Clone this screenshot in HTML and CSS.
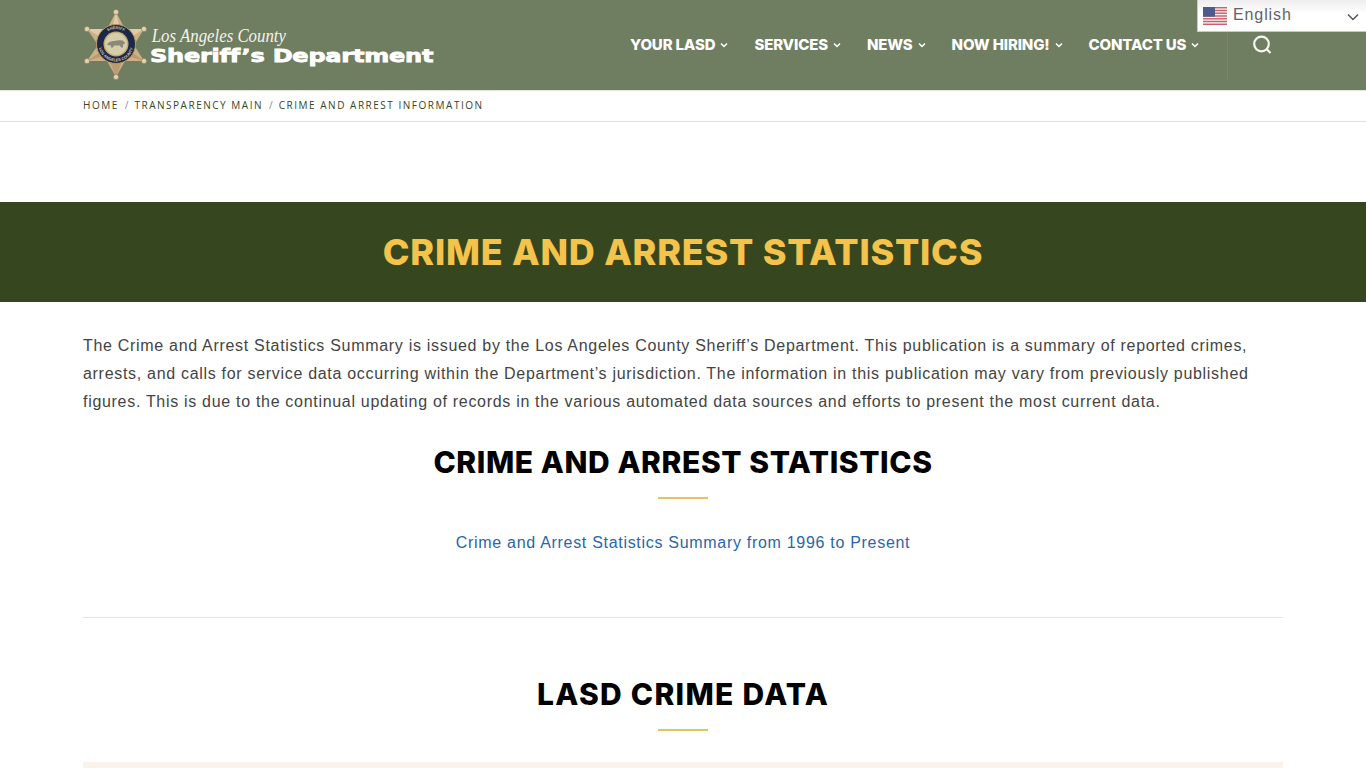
FILE: index.html
```html
<!DOCTYPE html>
<html lang="en">
<head>
<meta charset="utf-8">
<title>Crime and Arrest Statistics</title>
<link rel="stylesheet" href="styles.css">
</head>
<body>
<header class="site-header">
  <a class="logo" href="#">
    <svg class="badge" width="66" height="72" viewBox="0 0 66 72">
      <defs>
        <path id="ring-top" d="M17 35a15 15 0 0 1 30 0"/>
        <path id="ring-bottom" d="M14.500 35a17.500 17.500 0 0 0 35 0"/>
      </defs>
      <polygon points="32,3 41,20 60,20 50,36 60,52 41,52 32,68 23,52 3,52 14,36 3,20 23,20" fill="#cdb086"/>
      <polygon points="32,3 36,20 60,20 44,30 32,35 20,30 3,20 28,20" fill="#e0cba8"/>
      <polygon points="60,52 41,46 32,68 23,46 3,52 18,42 32,40 46,42" fill="#bb9b70"/>
      <g fill="#e2d3b4" stroke="#8d7a58" stroke-width=".6">
        <circle cx="32" cy="3" r="2.600"/><circle cx="60" cy="20" r="2.600"/><circle cx="60" cy="52" r="2.600"/>
        <circle cx="32" cy="68" r="2.600"/><circle cx="3" cy="52" r="2.600"/><circle cx="3" cy="20" r="2.600"/>
      </g>
      <circle cx="32" cy="35" r="19.500" fill="#1d2748"/>
      <circle cx="32" cy="35" r="19.500" fill="none" stroke="#b59a62" stroke-width="1"/>
      <circle cx="32" cy="35" r="12.500" fill="#c3ad72"/>
      <circle cx="32" cy="35" r="11" fill="#d6cdaa"/>
      <path d="M23 36c1-3 4-4 7-4 3 0 6-1 8-.5 2 .5 3 2 3 3l-2 1v3h-2l-1-2h-6l-1 2h-2v-2z" fill="#8a887a"/>
      <text class="badge-text"><textPath href="#ring-top" startOffset="50%" text-anchor="middle">SHERIFF</textPath></text>
      <text class="badge-text"><textPath href="#ring-bottom" startOffset="50%" text-anchor="middle">LOS ANGELES COUNTY</textPath></text>
    </svg>
    <span class="logo-text">
      <span class="logo-county">Los Angeles County</span>
      <span class="logo-dept">Sheriff’s Department</span>
    </span>
  </a>
  <nav class="main-nav">
    <a class="nav-item" href="#">YOUR LASD <svg class="chev" viewBox="0 0 8 6"><path d="M1 1.500l3 3 3-3"/></svg></a>
    <a class="nav-item" href="#">SERVICES <svg class="chev" viewBox="0 0 8 6"><path d="M1 1.500l3 3 3-3"/></svg></a>
    <a class="nav-item" href="#">NEWS <svg class="chev" viewBox="0 0 8 6"><path d="M1 1.500l3 3 3-3"/></svg></a>
    <a class="nav-item" href="#">NOW HIRING! <svg class="chev" viewBox="0 0 8 6"><path d="M1 1.500l3 3 3-3"/></svg></a>
    <a class="nav-item" href="#">CONTACT US <svg class="chev" viewBox="0 0 8 6"><path d="M1 1.500l3 3 3-3"/></svg></a>
  </nav>
  <div class="search-cell">
    <svg class="search-icon" width="20" height="20" viewBox="0 0 20 20"><circle cx="9.500" cy="9" r="7.300"/><path d="M14.800 14.300l3.700 3.700"/></svg>
  </div>
</header>

<div class="lang-widget">
  <svg class="flag" width="24" height="18" viewBox="0 0 24 18">
    <rect width="24" height="18" fill="#f4f0f0"/>
    <g fill="#c9606a"><rect width="24" height="1.400"/><rect y="2.800" width="24" height="1.400"/><rect y="5.500" width="24" height="1.400"/><rect y="8.300" width="24" height="1.400"/><rect y="11.100" width="24" height="1.400"/><rect y="13.800" width="24" height="1.400"/><rect y="16.600" width="24" height="1.400"/></g>
    <rect width="12" height="9.700" fill="#4f5a8c"/>
  </svg>
  <span class="lang-label">English</span>
  <svg class="lang-chev" width="12" height="8" viewBox="0 0 12 8"><path d="M1 1.500l5 5 5-5"/></svg>
</div>

<div class="breadcrumbs">
  <a href="#">HOME</a><span class="sep">/</span><a href="#">TRANSPARENCY MAIN</a><span class="sep">/</span><span>CRIME AND ARREST INFORMATION</span>
</div>

<section class="banner"><h1>CRIME AND ARREST STATISTICS</h1></section>

<main class="content">
  <p class="intro">The Crime and Arrest Statistics Summary is issued by the Los Angeles County Sheriff’s Department. This publication is a summary of reported crimes, arrests, and calls for service data occurring within the Department’s jurisdiction. The information in this publication may vary from previously published figures. This is due to the continual updating of records in the various automated data sources and efforts to present the most current data.</p>
  <h2 class="section-title">CRIME AND ARREST STATISTICS</h2>
  <div class="rule"></div>
  <p class="link-line"><a href="#">Crime and Arrest Statistics Summary from 1996 to Present</a></p>
  <hr class="divider">
  <h2 class="section-title second">LASD CRIME DATA</h2>
  <div class="rule"></div>
  <div class="beige"></div>
</main>
</body>
</html>
```
FILE: styles.css
```css
* { box-sizing: border-box; }
html, body { margin: 0; padding: 0; height: 768px; overflow: hidden; }
body { font-family: "Liberation Sans", Arial, sans-serif; background: #fff; color: #3b3b3b; }
a { text-decoration: none; color: inherit; }

.site-header {
  height: 91px;
  background: #6f7d60;
  border-bottom: 1px solid #dfe5da;
  display: flex;
  align-items: flex-start;
  padding-left: 83px;
}
.logo { display: flex; align-items: flex-start; flex: none; width: 353px; padding-top: 9px; margin-left: 1px; }
.badge { flex: none; }
.badge-text { font-family: "Liberation Sans", sans-serif; font-size: 4px; font-weight: 700; fill: #d8c9a0; }
.logo-text { display: flex; flex-direction: column; color: #fff; padding-top: 16px; }
.logo-county {
  font-family: "Liberation Serif", serif; font-style: italic; font-size: 19px; line-height: 20px;
  color: #f3f3ee; white-space: nowrap; padding-left: 2px;
  transform: translateY(1px) scaleX(.885); transform-origin: left center;
}
.logo-dept {
  font-family: "DejaVu Sans", sans-serif; font-weight: 700; font-size: 18.500px; line-height: 22.500px;
  letter-spacing: -.2px; -webkit-text-stroke: .8px #fff; white-space: nowrap;
  transform: scaleX(1.3); transform-origin: left center;
}

.main-nav { display: flex; flex: none; gap: 26px; margin-left: 193px; padding-top: 36px; }
.nav-item {
  font-family: Inter, sans-serif; font-weight: 800; font-size: 15px; line-height: 18px;
  letter-spacing: -.15px; color: #fff; white-space: nowrap; display: flex; align-items: center; gap: 5px;
}
.chev { width: 8px; height: 6px; fill: none; stroke: #fff; stroke-width: 1.500; }

.search-cell {
  margin-left: 28px; width: 70px; height: 80px; border-left: 1px solid #7a8869;
  padding: 35px 0 0 24px; flex: none;
}
.search-icon { fill: none; stroke: #f6f6f0; stroke-width: 2.200; display: block; }

.lang-widget {
  position: absolute; top: 0; left: 1197px; width: 169px; height: 32px;
  background: linear-gradient(#eeeeee, #ffffff 45%);
  border: 1px solid #c9c9c9; border-top: 0; border-right: 0;
  display: flex; align-items: center; padding-left: 5px;
}
.flag { flex: none; }
.lang-label { margin: -2px 0 0 6px; font-size: 16px; letter-spacing: .9px; color: #62626c; line-height: 28px; }
.lang-chev { position: absolute; right: 7px; top: 13px; fill: none; stroke: #555; stroke-width: 1.500; }

.breadcrumbs {
  height: 31px; padding: 0 83px 2px; border-bottom: 1px solid #e1e1e1;
  display: flex; align-items: center;
  font-family: "Open Sans", sans-serif; font-size: 10px; letter-spacing: 1.520px; color: #37461f;
}
.sep { margin: 0 6px; color: #8a8a8a; letter-spacing: 0; }

.banner {
  margin-top: 80px; height: 100px; background: #36471f;
  display: flex; align-items: center; justify-content: center;
}
.banner h1 {
  margin: 0; font-family: Inter, sans-serif; font-weight: 800; font-size: 36px; line-height: 40px;
  letter-spacing: .75px; color: #f3c34c;
}

.content { padding: 0 83px; }
.intro { margin: 30px 0 0; font-size: 16px; line-height: 28px; letter-spacing: .695px; color: #444; }
.section-title {
  margin: 26px 0 0; text-align: center; font-family: Inter, sans-serif; font-weight: 800;
  font-size: 30px; line-height: 40px; letter-spacing: .58px; color: #000;
}
.rule { width: 50px; height: 2px; background: #e5c35f; margin: 15px auto 0; }
.link-line { margin: 32px 0 0; text-align: center; font-size: 16px; line-height: 24px; letter-spacing: .7px; }
.link-line a { color: #2a66a8; }
.divider { margin: 62px 0 0; border: 0; border-top: 1px solid #e3e3e3; }
.section-title.second { margin-top: 56px; letter-spacing: 1.300px; }
.beige { height: 6px; margin-top: 31px; background: #f9f3ea; }
```
